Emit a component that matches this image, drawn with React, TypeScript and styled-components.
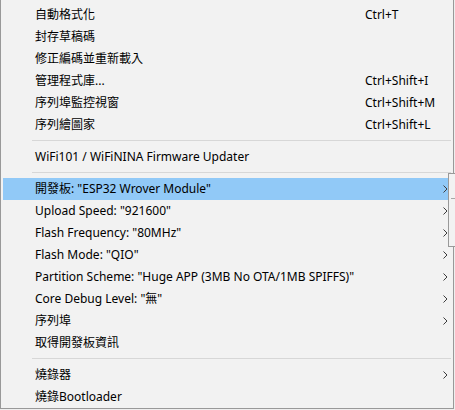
import React from "react";
import styled, { createGlobalStyle } from "styled-components";

const GlobalStyle = createGlobalStyle`
  html, body {
    margin: 0;
    padding: 0;
    background: #eeeeee;
    overflow: hidden;
  }
  body {
    font-family: "Noto Sans", "Noto Sans CJK TC", sans-serif;
    font-size: 12px;
    color: #000;
  }
`;

const Menu = styled.div`
  position: relative;
  box-sizing: border-box;
  width: 454px;
  background: #f2f2f2;
  border: 1px solid #999999;
  border-top: none;
  padding: 4px 2px 0 2px;
  display: flex;
  flex-direction: column;
`;

const Item = styled.div<{ $active?: boolean }>`
  display: grid;
  grid-template-columns: 330px 1fr 14px;
  align-items: center;
  height: 22px;
  padding-left: 32px;
  background: ${(p) => (p.$active ? "#91c9f7" : "transparent")};
  white-space: nowrap;
`;

const Label = styled.span`
  line-height: 22px;
`;

const Shortcut = styled.span`
  line-height: 22px;
`;

const Arrow = styled.svg`
  justify-self: end;
  margin-right: 3px;
  width: 5px;
  height: 8px;
`;

const Separator = styled.div`
  height: 1px;
  margin: 4px 0 5px 29px;
  background: #d7d7d7;
`;

const SubmenuEdge = styled.div`
  position: absolute;
  left: 447px;
  top: 173px;
  width: 20px;
  height: 72px;
  background: #f2f2f2;
  border: 1px solid #999999;
  border-right: none;
`;

const SubmenuDivider = styled.div`
  margin: 24px 0 0 2px;
  height: 1px;
  background: #a8a8a8;
`;

type Entry =
  | { kind: "sep" }
  | { kind: "item"; label: string; shortcut?: string; sub?: boolean; active?: boolean };

const entries: Entry[] = [
  { kind: "item", label: "自動格式化", shortcut: "Ctrl+T" },
  { kind: "item", label: "封存草稿碼" },
  { kind: "item", label: "修正編碼並重新載入" },
  { kind: "item", label: "管理程式庫...", shortcut: "Ctrl+Shift+I" },
  { kind: "item", label: "序列埠監控視窗", shortcut: "Ctrl+Shift+M" },
  { kind: "item", label: "序列繪圖家", shortcut: "Ctrl+Shift+L" },
  { kind: "sep" },
  { kind: "item", label: "WiFi101 / WiFiNINA Firmware Updater" },
  { kind: "sep" },
  { kind: "item", label: '開發板: "ESP32 Wrover Module"', sub: true, active: true },
  { kind: "item", label: 'Upload Speed: "921600"', sub: true },
  { kind: "item", label: 'Flash Frequency: "80MHz"', sub: true },
  { kind: "item", label: 'Flash Mode: "QIO"', sub: true },
  { kind: "item", label: 'Partition Scheme: "Huge APP (3MB No OTA/1MB SPIFFS)"', sub: true },
  { kind: "item", label: 'Core Debug Level: "無"', sub: true },
  { kind: "item", label: "序列埠", sub: true },
  { kind: "item", label: "取得開發板資訊" },
  { kind: "sep" },
  { kind: "item", label: "燒錄器", sub: true },
  { kind: "item", label: "燒錄Bootloader" },
];

function Chevron() {
  return (
    <Arrow viewBox="0 0 5 8">
      <polyline points="0.5,0.5 4,4 0.5,7.5" fill="none" stroke="#3c3c3c" strokeWidth="1" />
    </Arrow>
  );
}

export default function App() {
  return (
    <>
      <GlobalStyle />
      <Menu>
        {entries.map((e, i) =>
          e.kind === "sep" ? (
            <Separator key={i} />
          ) : (
            <Item key={i} $active={e.active}>
              <Label>{e.label}</Label>
              <Shortcut>{e.shortcut ?? ""}</Shortcut>
              {e.sub ? <Chevron /> : <span />}
            </Item>
          )
        )}
        <SubmenuEdge>
          <SubmenuDivider />
        </SubmenuEdge>
      </Menu>
    </>
  );
}
